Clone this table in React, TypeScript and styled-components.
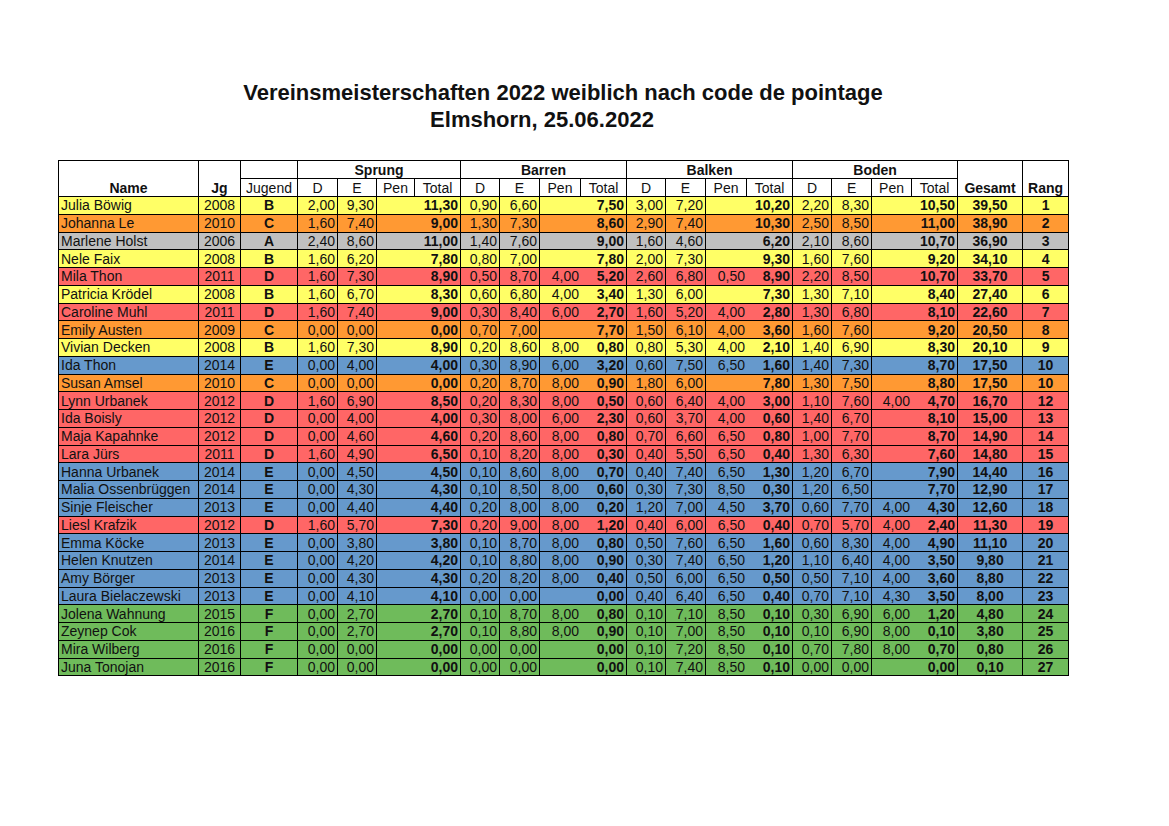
import React from 'react';
import styled, { createGlobalStyle } from 'styled-components';

const GlobalStyle = createGlobalStyle`
  html, body {
    margin: 0;
    padding: 0;
    background: #ffffff;
  }
  body {
    font-family: 'Liberation Sans', Arial, sans-serif;
    color: #111111;
  }
`;

const Page = styled.div`
  width: 1169px;
  height: 826px;
  box-sizing: border-box;
  padding: 79px 0 0 58px;
  background: #ffffff;
`;

const TitleBlock = styled.div`
  width: 1010px;
  display: flex;
  flex-direction: column;
  align-items: center;
  margin-bottom: 27px;
`;

const TitleLine = styled.div<{ $shift?: number }>`
  font-family: 'Liberation Sans Narrow', 'Liberation Sans', Arial, sans-serif;
  font-weight: 700;
  font-size: 22px;
  line-height: 27px;
  color: #111111;
  white-space: nowrap;
  margin-right: ${(p) => (p.$shift ? p.$shift * 2 : 0)}px;
`;

const Table = styled.table`
  border-collapse: separate;
  border-spacing: 0;
  table-layout: fixed;
  width: 1010px;
  border-top: 1px solid #000;
  border-left: 1px solid #000;
  font-size: 14px;
`;

const HeadRow = styled.tr`
  height: 18px;
`;

const Row = styled.tr<{ $bg: string }>`
  height: 17.75px;
  background: ${(p) => p.$bg};
`;

const HeadCell = styled.th<{ $bold?: boolean; $bottom?: boolean }>`
  padding: 0 2px;
  border-right: 1px solid #000;
  border-bottom: 1px solid #000;
  font-weight: ${(p) => (p.$bold ? 700 : 400)};
  text-align: center;
  vertical-align: ${(p) => (p.$bottom ? 'bottom' : 'middle')};
  line-height: 16px;
  white-space: nowrap;
  overflow: hidden;
`;

const Cell = styled.td<{ $align?: 'left' | 'center' | 'right'; $bold?: boolean; $open?: boolean }>`
  padding: 0 2px;
  border-right: ${(p) => (p.$open ? 'none' : '1px solid #000')};
  border-bottom: 1px solid #000;
  text-align: ${(p) => p.$align || 'right'};
  font-weight: ${(p) => (p.$bold ? 700 : 400)};
  line-height: 16px;
  white-space: nowrap;
  overflow: hidden;
`;

const colors: Record<string, string> = {
  A: '#c0c0c0',
  B: '#ffff66',
  C: '#ff9933',
  D: '#ff6666',
  E: '#6699cc',
  F: '#6fbb5b',
};

const widths = [140, 42, 57, 40, 39, 38, 46, 39, 40, 41, 46, 39, 40, 41, 46, 39, 40, 40, 46, 65, 46];

type Result = {
  name: string;
  jg: string;
  jugend: string;
  scores: string[][];
  gesamt: string;
  rang: string;
};

const raw = `Julia Böwig|2008|B|2,00 9,30 - 11,30|0,90 6,60 - 7,50|3,00 7,20 - 10,20|2,20 8,30 - 10,50|39,50|1
Johanna Le|2010|C|1,60 7,40 - 9,00|1,30 7,30 - 8,60|2,90 7,40 - 10,30|2,50 8,50 - 11,00|38,90|2
Marlene Holst|2006|A|2,40 8,60 - 11,00|1,40 7,60 - 9,00|1,60 4,60 - 6,20|2,10 8,60 - 10,70|36,90|3
Nele Faix|2008|B|1,60 6,20 - 7,80|0,80 7,00 - 7,80|2,00 7,30 - 9,30|1,60 7,60 - 9,20|34,10|4
Mila Thon|2011|D|1,60 7,30 - 8,90|0,50 8,70 4,00 5,20|2,60 6,80 0,50 8,90|2,20 8,50 - 10,70|33,70|5
Patricia Krödel|2008|B|1,60 6,70 - 8,30|0,60 6,80 4,00 3,40|1,30 6,00 - 7,30|1,30 7,10 - 8,40|27,40|6
Caroline Muhl|2011|D|1,60 7,40 - 9,00|0,30 8,40 6,00 2,70|1,60 5,20 4,00 2,80|1,30 6,80 - 8,10|22,60|7
Emily Austen|2009|C|0,00 0,00 - 0,00|0,70 7,00 - 7,70|1,50 6,10 4,00 3,60|1,60 7,60 - 9,20|20,50|8
Vivian Decken|2008|B|1,60 7,30 - 8,90|0,20 8,60 8,00 0,80|0,80 5,30 4,00 2,10|1,40 6,90 - 8,30|20,10|9
Ida Thon|2014|E|0,00 4,00 - 4,00|0,30 8,90 6,00 3,20|0,60 7,50 6,50 1,60|1,40 7,30 - 8,70|17,50|10
Susan Amsel|2010|C|0,00 0,00 - 0,00|0,20 8,70 8,00 0,90|1,80 6,00 - 7,80|1,30 7,50 - 8,80|17,50|10
Lynn Urbanek|2012|D|1,60 6,90 - 8,50|0,20 8,30 8,00 0,50|0,60 6,40 4,00 3,00|1,10 7,60 4,00 4,70|16,70|12
Ida Boisly|2012|D|0,00 4,00 - 4,00|0,30 8,00 6,00 2,30|0,60 3,70 4,00 0,60|1,40 6,70 - 8,10|15,00|13
Maja Kapahnke|2012|D|0,00 4,60 - 4,60|0,20 8,60 8,00 0,80|0,70 6,60 6,50 0,80|1,00 7,70 - 8,70|14,90|14
Lara Jürs|2011|D|1,60 4,90 - 6,50|0,10 8,20 8,00 0,30|0,40 5,50 6,50 0,40|1,30 6,30 - 7,60|14,80|15
Hanna Urbanek|2014|E|0,00 4,50 - 4,50|0,10 8,60 8,00 0,70|0,40 7,40 6,50 1,30|1,20 6,70 - 7,90|14,40|16
Malia Ossenbrüggen|2014|E|0,00 4,30 - 4,30|0,10 8,50 8,00 0,60|0,30 7,30 8,50 0,30|1,20 6,50 - 7,70|12,90|17
Sinje Fleischer|2013|E|0,00 4,40 - 4,40|0,20 8,00 8,00 0,20|1,20 7,00 4,50 3,70|0,60 7,70 4,00 4,30|12,60|18
Liesl Krafzik|2012|D|1,60 5,70 - 7,30|0,20 9,00 8,00 1,20|0,40 6,00 6,50 0,40|0,70 5,70 4,00 2,40|11,30|19
Emma Köcke|2013|E|0,00 3,80 - 3,80|0,10 8,70 8,00 0,80|0,50 7,60 6,50 1,60|0,60 8,30 4,00 4,90|11,10|20
Helen Knutzen|2014|E|0,00 4,20 - 4,20|0,10 8,80 8,00 0,90|0,30 7,40 6,50 1,20|1,10 6,40 4,00 3,50|9,80|21
Amy Börger|2013|E|0,00 4,30 - 4,30|0,20 8,20 8,00 0,40|0,50 6,00 6,50 0,50|0,50 7,10 4,00 3,60|8,80|22
Laura Bielaczewski|2013|E|0,00 4,10 - 4,10|0,00 0,00 - 0,00|0,40 6,40 6,50 0,40|0,70 7,10 4,30 3,50|8,00|23
Jolena Wahnung|2015|F|0,00 2,70 - 2,70|0,10 8,70 8,00 0,80|0,10 7,10 8,50 0,10|0,30 6,90 6,00 1,20|4,80|24
Zeynep Cok|2016|F|0,00 2,70 - 2,70|0,10 8,80 8,00 0,90|0,10 7,00 8,50 0,10|0,10 6,90 8,00 0,10|3,80|25
Mira Wilberg|2016|F|0,00 0,00 - 0,00|0,00 0,00 - 0,00|0,10 7,20 8,50 0,10|0,70 7,80 8,00 0,70|0,80|26
Juna Tonojan|2016|F|0,00 0,00 - 0,00|0,00 0,00 - 0,00|0,10 7,40 8,50 0,10|0,00 0,00 - 0,00|0,10|27`;

const results: Result[] = raw.split('\n').map((line) => {
  const parts = line.split('|');
  return {
    name: parts[0],
    jg: parts[1],
    jugend: parts[2],
    scores: parts.slice(3, 7).map((s) => s.split(' ').map((v) => (v === '-' ? '' : v))),
    gesamt: parts[7],
    rang: parts[8],
  };
});

const apparatus = ['Sprung', 'Barren', 'Balken', 'Boden'];

const App: React.FC = () => {
  return (
    <>
      <GlobalStyle />
      <Page>
        <TitleBlock>
          <TitleLine>Vereinsmeisterschaften 2022 weiblich nach code de pointage</TitleLine>
          <TitleLine $shift={21}>Elmshorn, 25.06.2022</TitleLine>
        </TitleBlock>

        <Table>
          <colgroup>
            {widths.map((w, i) => (
              <col key={i} style={{ width: w }} />
            ))}
          </colgroup>
          <thead>
            <HeadRow>
              <HeadCell rowSpan={2} $bold $bottom>Name</HeadCell>
              <HeadCell rowSpan={2} $bold $bottom>Jg</HeadCell>
              <HeadCell />
              {apparatus.map((a) => (
                <HeadCell key={a} colSpan={4} $bold>{a}</HeadCell>
              ))}
              <HeadCell rowSpan={2} $bold $bottom>Gesamt</HeadCell>
              <HeadCell rowSpan={2} $bold $bottom>Rang</HeadCell>
            </HeadRow>
            <HeadRow>
              <HeadCell>Jugend</HeadCell>
              {apparatus.map((a) => (
                <React.Fragment key={a}>
                  <HeadCell>D</HeadCell>
                  <HeadCell>E</HeadCell>
                  <HeadCell>Pen</HeadCell>
                  <HeadCell>Total</HeadCell>
                </React.Fragment>
              ))}
            </HeadRow>
          </thead>
          <tbody>
            {results.map((r) => (
              <Row key={r.name} $bg={colors[r.jugend]}>
                <Cell $align="left">{r.name}</Cell>
                <Cell $align="center">{r.jg}</Cell>
                <Cell $align="center" $bold>{r.jugend}</Cell>
                {r.scores.map((s, i) => (
                  <React.Fragment key={i}>
                    <Cell>{s[0]}</Cell>
                    <Cell>{s[1]}</Cell>
                    <Cell $open>{s[2]}</Cell>
                    <Cell $bold>{s[3]}</Cell>
                  </React.Fragment>
                ))}
                <Cell $align="center" $bold>{r.gesamt}</Cell>
                <Cell $align="center" $bold>{r.rang}</Cell>
              </Row>
            ))}
          </tbody>
        </Table>
      </Page>
    </>
  );
};

export default App;
